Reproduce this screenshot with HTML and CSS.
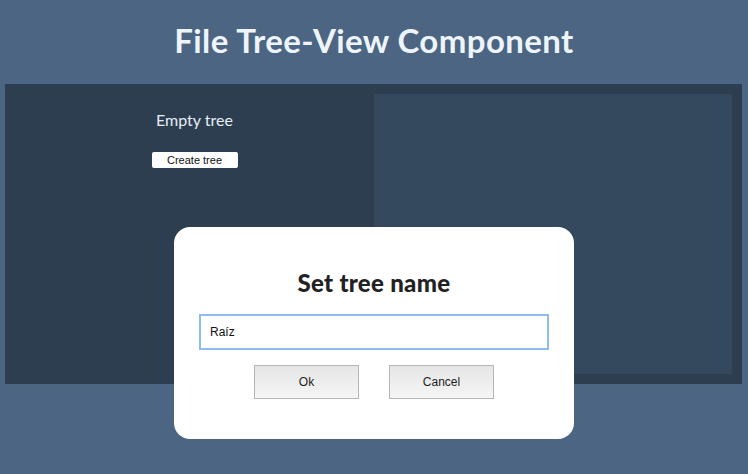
FILE: index.html
```html
<!DOCTYPE html>
<html>
<head>
<meta charset="utf-8">
<link rel="stylesheet" href="styles.css">
</head>
<body>
<header class="header"><h1 class="title">File Tree-View Component</h1></header>
<main class="panel">
  <section class="left">
    <p class="empty">Empty tree</p>
    <button class="create">Create tree</button>
  </section>
  <section class="right"><div class="view"></div></section>
</main>
<div class="modal">
  <h2 class="modal-title">Set tree name</h2>
  <input class="name-input" type="text" value="Raíz">
  <div class="actions">
    <button class="btn">Ok</button>
    <button class="btn">Cancel</button>
  </div>
</div>
</body>
</html>
```
FILE: styles.css
```css
html, body { margin: 0; padding: 0; }
body {
  background: #4b6582;
  width: 748px;
  height: 474px;
  overflow: hidden;
  font-family: Lato, "Noto Sans", sans-serif;
}
.header {
  height: 84px;
  display: flex;
  align-items: center;
  justify-content: center;
}
.title {
  margin: 0;
  margin-top: -5px;
  font-size: 33px;
  font-weight: 700;
  color: #eef4fb;
  letter-spacing: 0.4px;
}
.panel {
  margin: 0 6px 0 5px;
  height: 300px;
  background: #2e3e51;
  display: grid;
  grid-template-columns: 369px 1fr;
}
.left {
  display: flex;
  flex-direction: column;
  align-items: center;
  padding-left: 10px;
}
.empty {
  margin: 26px 0 0;
  font-size: 16px;
  color: #e6edf5;
  font-weight: 400;
  line-height: 20px;
}
.create {
  margin-top: 22px;
  width: 86px;
  height: 16px;
  padding: 0;
  border: none;
  border-radius: 2px;
  background: #fff;
  font-family: "Liberation Sans", Arial, sans-serif;
  font-size: 11px;
  color: #111;
  line-height: 16px;
}
.right { padding: 10px 10px 10px 0; }
.view { height: 100%; background: #34495e; }
.modal {
  position: absolute;
  left: 174px;
  top: 227px;
  width: 400px;
  height: 212px;
  background: #fff;
  border-radius: 16px;
  display: flex;
  flex-direction: column;
  align-items: center;
  box-sizing: border-box;
  padding-top: 41px;
}
.modal-title {
  margin: 0;
  font-size: 24px;
  font-weight: 900;
  color: #222;
  line-height: 30px;
  letter-spacing: 0.3px;
}
.name-input {
  margin-top: 16px;
  width: 350px;
  height: 36px;
  box-sizing: border-box;
  border: 2px solid #8dbbf2;
  outline: none;
  padding: 0 9px;
  font-family: "Liberation Sans", Arial, sans-serif;
  font-size: 12px;
  color: #111;
}
.actions {
  margin-top: 15px;
  display: flex;
  gap: 30px;
}
.btn {
  width: 105px;
  height: 34px;
  border: 1px solid #b5b5b5;
  background: linear-gradient(#e5e5e5, #f5f5f5);
  font-family: "Liberation Sans", Arial, sans-serif;
  font-size: 12px;
  color: #222;
  padding: 0;
}
```
